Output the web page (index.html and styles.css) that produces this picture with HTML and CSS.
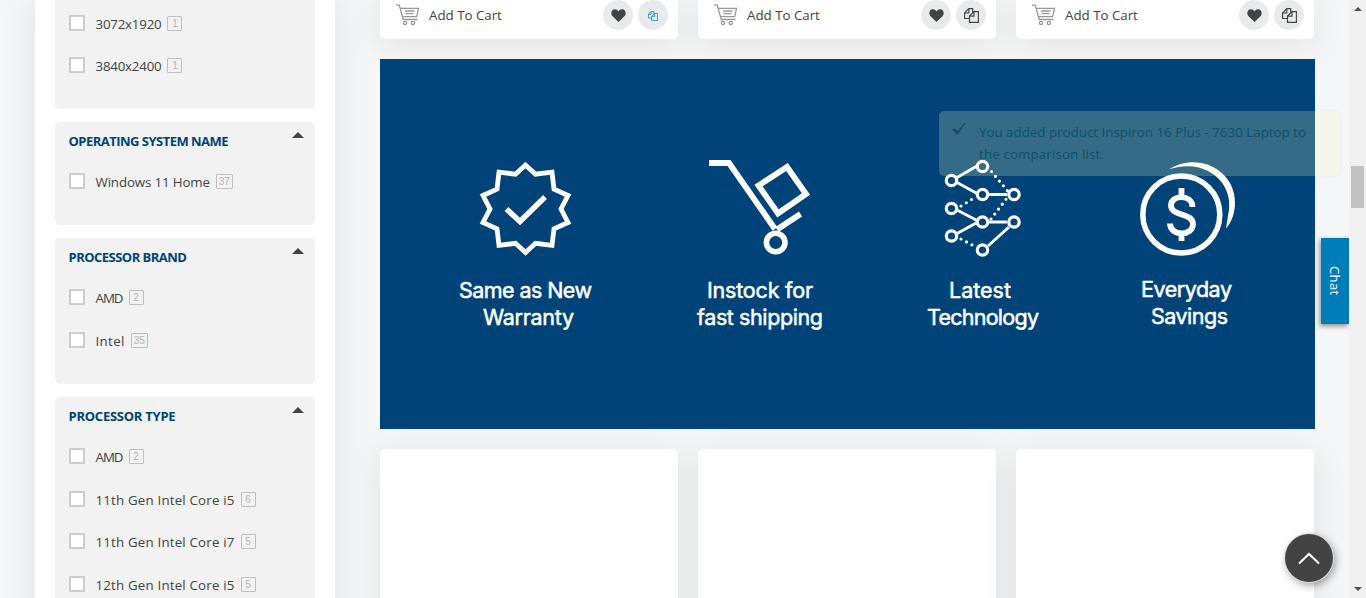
FILE: index.html
```html
<!DOCTYPE html>
<html lang="en">
<head>
<meta charset="utf-8">
<title>Laptops</title>
<link rel="stylesheet" href="styles.css">
</head>
<body>
<svg width="0" height="0" class="defs">
  <symbol id="cart" viewBox="0 0 24 22"><path d="M0 1.200h3.300l3.900 14.300h14.300M4.200 4.300h18.300l-1.800 8.300H6.600M9 7h9.500M9.500 9.600h8" fill="none" stroke="#999" stroke-width="1.300"/><circle cx="9" cy="19" r="1.600" fill="none" stroke="#999" stroke-width="1.300"/><circle cx="16.800" cy="19" r="1.600" fill="none" stroke="#999" stroke-width="1.300"/></symbol>
  <symbol id="heart" viewBox="0 0 15 13"><path d="M7.500 13L1.300 7C-.5 5 0 .3 4 .3c1.800 0 3 1.200 3.500 2.100C8 1.500 9.200.3 11 .3c4 0 4.500 4.700 2.700 6.700z" fill="#434343"/></symbol>
  <symbol id="copy" viewBox="0 0 15 15"><path d="M5.500 10.500H.6V5L4.800.6h3.900v4M4.800.6V5H.6M10 3.600h4.400v10.800H5.500V8.100L10 3.600v4.500H5.500" fill="none" stroke="currentColor" stroke-width="1.150"/></symbol>
</svg>
<div class="page">
  <aside class="sidebar">
    <section class="group group-first">
      <div class="row"><i class="box"></i><span class="label digits">3072x1920</span><span class="count">1</span></div>
      <div class="row"><i class="box"></i><span class="label digits">3840x2400</span><span class="count">1</span></div>
    </section>
    <section class="group">
      <h3>OPERATING SYSTEM NAME<i class="caret"></i></h3>
      <div class="row"><i class="box"></i><span class="label os">Windows 11 Home</span><span class="count">37</span></div>
    </section>
    <section class="group group-brand">
      <h3>PROCESSOR BRAND<i class="caret"></i></h3>
      <div class="row"><i class="box"></i><span class="label caps">AMD</span><span class="count">2</span></div>
      <div class="row"><i class="box"></i><span class="label brand">Intel</span><span class="count">35</span></div>
    </section>
    <section class="group">
      <h3 class="type">PROCESSOR TYPE<i class="caret"></i></h3>
      <div class="row"><i class="box"></i><span class="label caps">AMD</span><span class="count">2</span></div>
      <div class="row"><i class="box"></i><span class="label cpu">11th Gen Intel Core i5</span><span class="count">6</span></div>
      <div class="row"><i class="box"></i><span class="label cpu">11th Gen Intel Core i7</span><span class="count">5</span></div>
      <div class="row"><i class="box"></i><span class="label cpu">12th Gen Intel Core i5</span><span class="count">5</span></div>
    </section>
  </aside>
  <main class="main">
    <div class="cards">
      <div class="card actions"><svg class="cart"><use href="#cart"/></svg><span class="add">Add To Cart</span><b class="round"><svg class="heart"><use href="#heart"/></svg></b><b class="round"><svg class="copy small"><use href="#copy"/></svg></b></div>
      <div class="card actions"><svg class="cart"><use href="#cart"/></svg><span class="add">Add To Cart</span><b class="round"><svg class="heart"><use href="#heart"/></svg></b><b class="round"><svg class="copy"><use href="#copy"/></svg></b></div>
      <div class="card actions"><svg class="cart"><use href="#cart"/></svg><span class="add">Add To Cart</span><b class="round"><svg class="heart"><use href="#heart"/></svg></b><b class="round"><svg class="copy"><use href="#copy"/></svg></b></div>
    </div>
    <svg class="banner" viewBox="380 59 935 370">
      <g fill="none" stroke="#fff" stroke-width="4.800">
        <path d="M525.500 165l10 9.200 16.500-2 2 17 14 6.300-7 13.500 7 13.500-14 6.300-2 16.500-16.500-2-10 9.200-10-9.200-16.500 2-2-16.500-14-6.300 7-13.500-7-13.500 14-6.300 2-17 16.500 2z"/>
        <path d="M506.500 209l13.500 12.500 25-24.500" stroke-width="5.500"/>
        <path d="M709 163h20l46 66M777 229.500l23.500-15.500M787 167l19 27-28 19.500-19.500-28z" stroke-width="5.800"/>
        <circle cx="775.700" cy="242.500" r="9.300" stroke-width="5.600"/>
      </g>
      <g fill="none" stroke="#fff" stroke-width="3">
        <path d="M957 177.500l20-11.500M957 182.500l21 11.500M989 194.500h18M957 210l21 11M957 233.500l21-11.500M989 222h18M988 246l21-19"/>
        <path d="M991.500 171.500l16.500 20M961 206l13-8M991 219l16-21M961 239l15 8" stroke-width="3.200" stroke-linecap="round" stroke-dasharray="0 6.200"/>
        <g stroke-width="3.200"><circle cx="951.500" cy="180.500" r="5.200"/><circle cx="982.500" cy="166.500" r="5.200"/><circle cx="982.500" cy="194.500" r="5.200"/><circle cx="1014" cy="194.500" r="5.200"/><circle cx="951.500" cy="208.500" r="5.200"/><circle cx="982.500" cy="222" r="5.200"/><circle cx="1014" cy="222" r="5.200"/><circle cx="951.500" cy="236" r="5.200"/><circle cx="982.500" cy="250" r="5.200"/></g>
      </g>
      <circle cx="1181.300" cy="214.500" r="38.500" fill="none" stroke="#fff" stroke-width="5.500"/>
      <path d="M1169 169.500c27-18 66-1 66 33 0 10-3 19-9 26l2-13c8-30-20-59-59-46z" fill="#fff"/>
      <path d="M1192.500 207c0-13-21.500-13-21.500-1.500 0 11 22 7 22 18.500 0 12.500-23 12.500-23-.5M1181.500 188v9M1181.500 232v9" fill="none" stroke="#fff" stroke-width="5.800"/>
      <g class="banner-text">
        <text x="459" y="298" textLength="133">Same as New</text><text x="483" y="325" textLength="91">Warranty</text>
        <text x="707" y="298" textLength="106">Instock for</text><text x="697" y="325" textLength="126">fast shipping</text>
        <text x="949" y="298" textLength="62">Latest</text><text x="927" y="325" textLength="112">Technology</text>
        <text x="1141" y="297" textLength="91">Everyday</text><text x="1151" y="324" textLength="77">Savings</text>
      </g>
    </svg>
    <div class="cards"><div class="card blank"></div><div class="card blank"></div><div class="card blank"></div></div>
  </main>
  <div class="scroll"><i class="up"></i><i class="thumb"></i><i class="down"></i></div>
</div>
<div class="toast"><svg class="tick" viewBox="0 0 14 12"><path d="M0 6.500l3-1 2.300 2.700L12.500 0l1.200.3L5.300 12z" fill="#0a5268"/></svg><p><span>You added product Inspiron 16 Plus - 7630 Laptop to</span><br><span class="second">the comparison list.</span></p></div>
<div class="chat">Chat</div>
<div class="top"><svg width="22" height="13" viewBox="0 0 22 13"><path d="M1 11.500l10-9.500 10 9.500" fill="none" stroke="#fff" stroke-width="2"/></svg></div>
</body>
</html>
```
FILE: styles.css
```css
* { box-sizing: border-box; }
body { margin: 0; height: 598px; overflow: hidden; background: #f5f6f8; font-family: "Open Sans", "Noto Sans", sans-serif; color: #434343; }
.defs { position: absolute; }
.page { display: flex; height: 598px; overflow: hidden; }
.sidebar { flex: none; width: 300px; height: 720px; margin-left: 35px; padding: 0 20px; background: #fff; box-shadow: 0 0 35px rgba(0,0,0,.09); display: flex; flex-direction: column; gap: 13px; }
.group { flex: none; background: #f2f2f2; border-radius: 5px; padding: 0 13px 36px 14px; display: flex; flex-direction: column; gap: 26.700px; }
.group-first { height: 109px; padding-top: 15px; gap: 26px; border-radius: 0 0 5px 5px; }
.group-brand { height: 146px; }
h3 { display: flex; justify-content: space-between; height: 38px; margin: 0 -2px -13.700px -.5px; font-size: 13px; line-height: 38px; font-weight: 700; color: #004378; letter-spacing: -.52px; white-space: nowrap; }
h3.type { letter-spacing: -.25px; }
.caret { width: 0; height: 0; margin: 10px 0 0; border: 6px solid transparent; border-top: 0; border-bottom-color: #434343; }
.row { display: flex; height: 16px; flex: none; }
.box { width: 16px; height: 16px; border: 2px solid #ccc; border-radius: 1px; background: #fff; }
.label { margin-left: 10.500px; font-size: 13.300px; line-height: 18px; white-space: nowrap; }
.digits { letter-spacing: -.2px; }
.os { letter-spacing: -.13px; }
.caps { letter-spacing: -1px; }
.brand { letter-spacing: .35px; }
.cpu { letter-spacing: .19px; }
.count { min-width: 15px; height: 15px; margin: 1px 0 0 6px; padding: 0 2px; border: 1px solid #bfbfbf; border-radius: 1px; font: 10px/13px "Liberation Sans", sans-serif; color: #b5b5b5; text-align: center; }
.main { flex: none; width: 935px; margin-left: 45px; }
.cards { display: flex; gap: 20px; }
.card { width: 298px; background: #fff; box-shadow: 0 5px 35px rgba(0,0,0,.09); }
.actions { height: 39px; border-radius: 0 0 5px 5px; padding: 0 10px 9px 16px; display: flex; align-items: center; }
.cart { width: 24px; height: 22px; }
.add { flex: 1; margin-left: 9px; font-size: 13.300px; }
.round { width: 30px; height: 30px; margin-left: 5px; border-radius: 50%; background: #e9eaec; display: flex; align-items: center; justify-content: center; color: #434343; }
.heart { width: 15px; height: 13px; margin-top: 1px; }
.copy { width: 15px; height: 15px; margin-top: 1px; }
.small { width: 10px; height: 10px; color: #0085c3; margin-top: 2px; }
.banner { position: relative; display: block; width: 935px; height: 370px; margin: 20px 0; background: #004379; }
.banner-text { fill: #fff; stroke: #fff; stroke-width: .5px; font: 21.500px Inter, sans-serif; }
.blank { height: 300px; border-radius: 5px; }
.scroll { flex: none; width: 17px; margin-left: 34px; background: #f0f0f0; display: flex; flex-direction: column; align-items: center; z-index: 1; }
.up, .down { width: 0; height: 0; border: 4px solid transparent; }
.up { margin-top: 7px; border-top: 0; border-bottom-color: #505050; }
.thumb { width: 13px; height: 42px; margin-top: 155px; background: #c1c1c1; }
.down { margin: auto 0 7px; border-bottom: 0; border-top-color: #505050; }
.toast { position: absolute; left: 939px; top: 111px; width: 401px; height: 65px; padding: 10px 0 0 13px; border-radius: 5px; background: rgba(245,251,187,.22); box-shadow: 0 0 2px rgba(0,0,0,.08); display: flex; color: #0a5268; }
.tick { width: 14px; height: 12px; margin-top: 2px; }
.toast p { margin: 0 0 0 13px; font-size: 13.300px; line-height: 22px; white-space: nowrap; letter-spacing: .02px; }
.toast .second { letter-spacing: .15px; }
.chat { position: absolute; left: 1321px; top: 238px; width: 28px; height: 86px; background: #007db8; color: #fff; writing-mode: vertical-rl; text-align: center; line-height: 28px; font-size: 13px; letter-spacing: .4px; box-shadow: -1px 2px 5px rgba(0,0,0,.45); clip-path: inset(-10px 0 -10px -10px); }
.top { position: absolute; left: 1285px; top: 534px; width: 48px; height: 48px; border-radius: 50%; background: #434343; box-shadow: 0 0 0 1px #e2e2e2, 2px 3px 8px rgba(0,0,0,.4); display: flex; align-items: center; justify-content: center; }
```
